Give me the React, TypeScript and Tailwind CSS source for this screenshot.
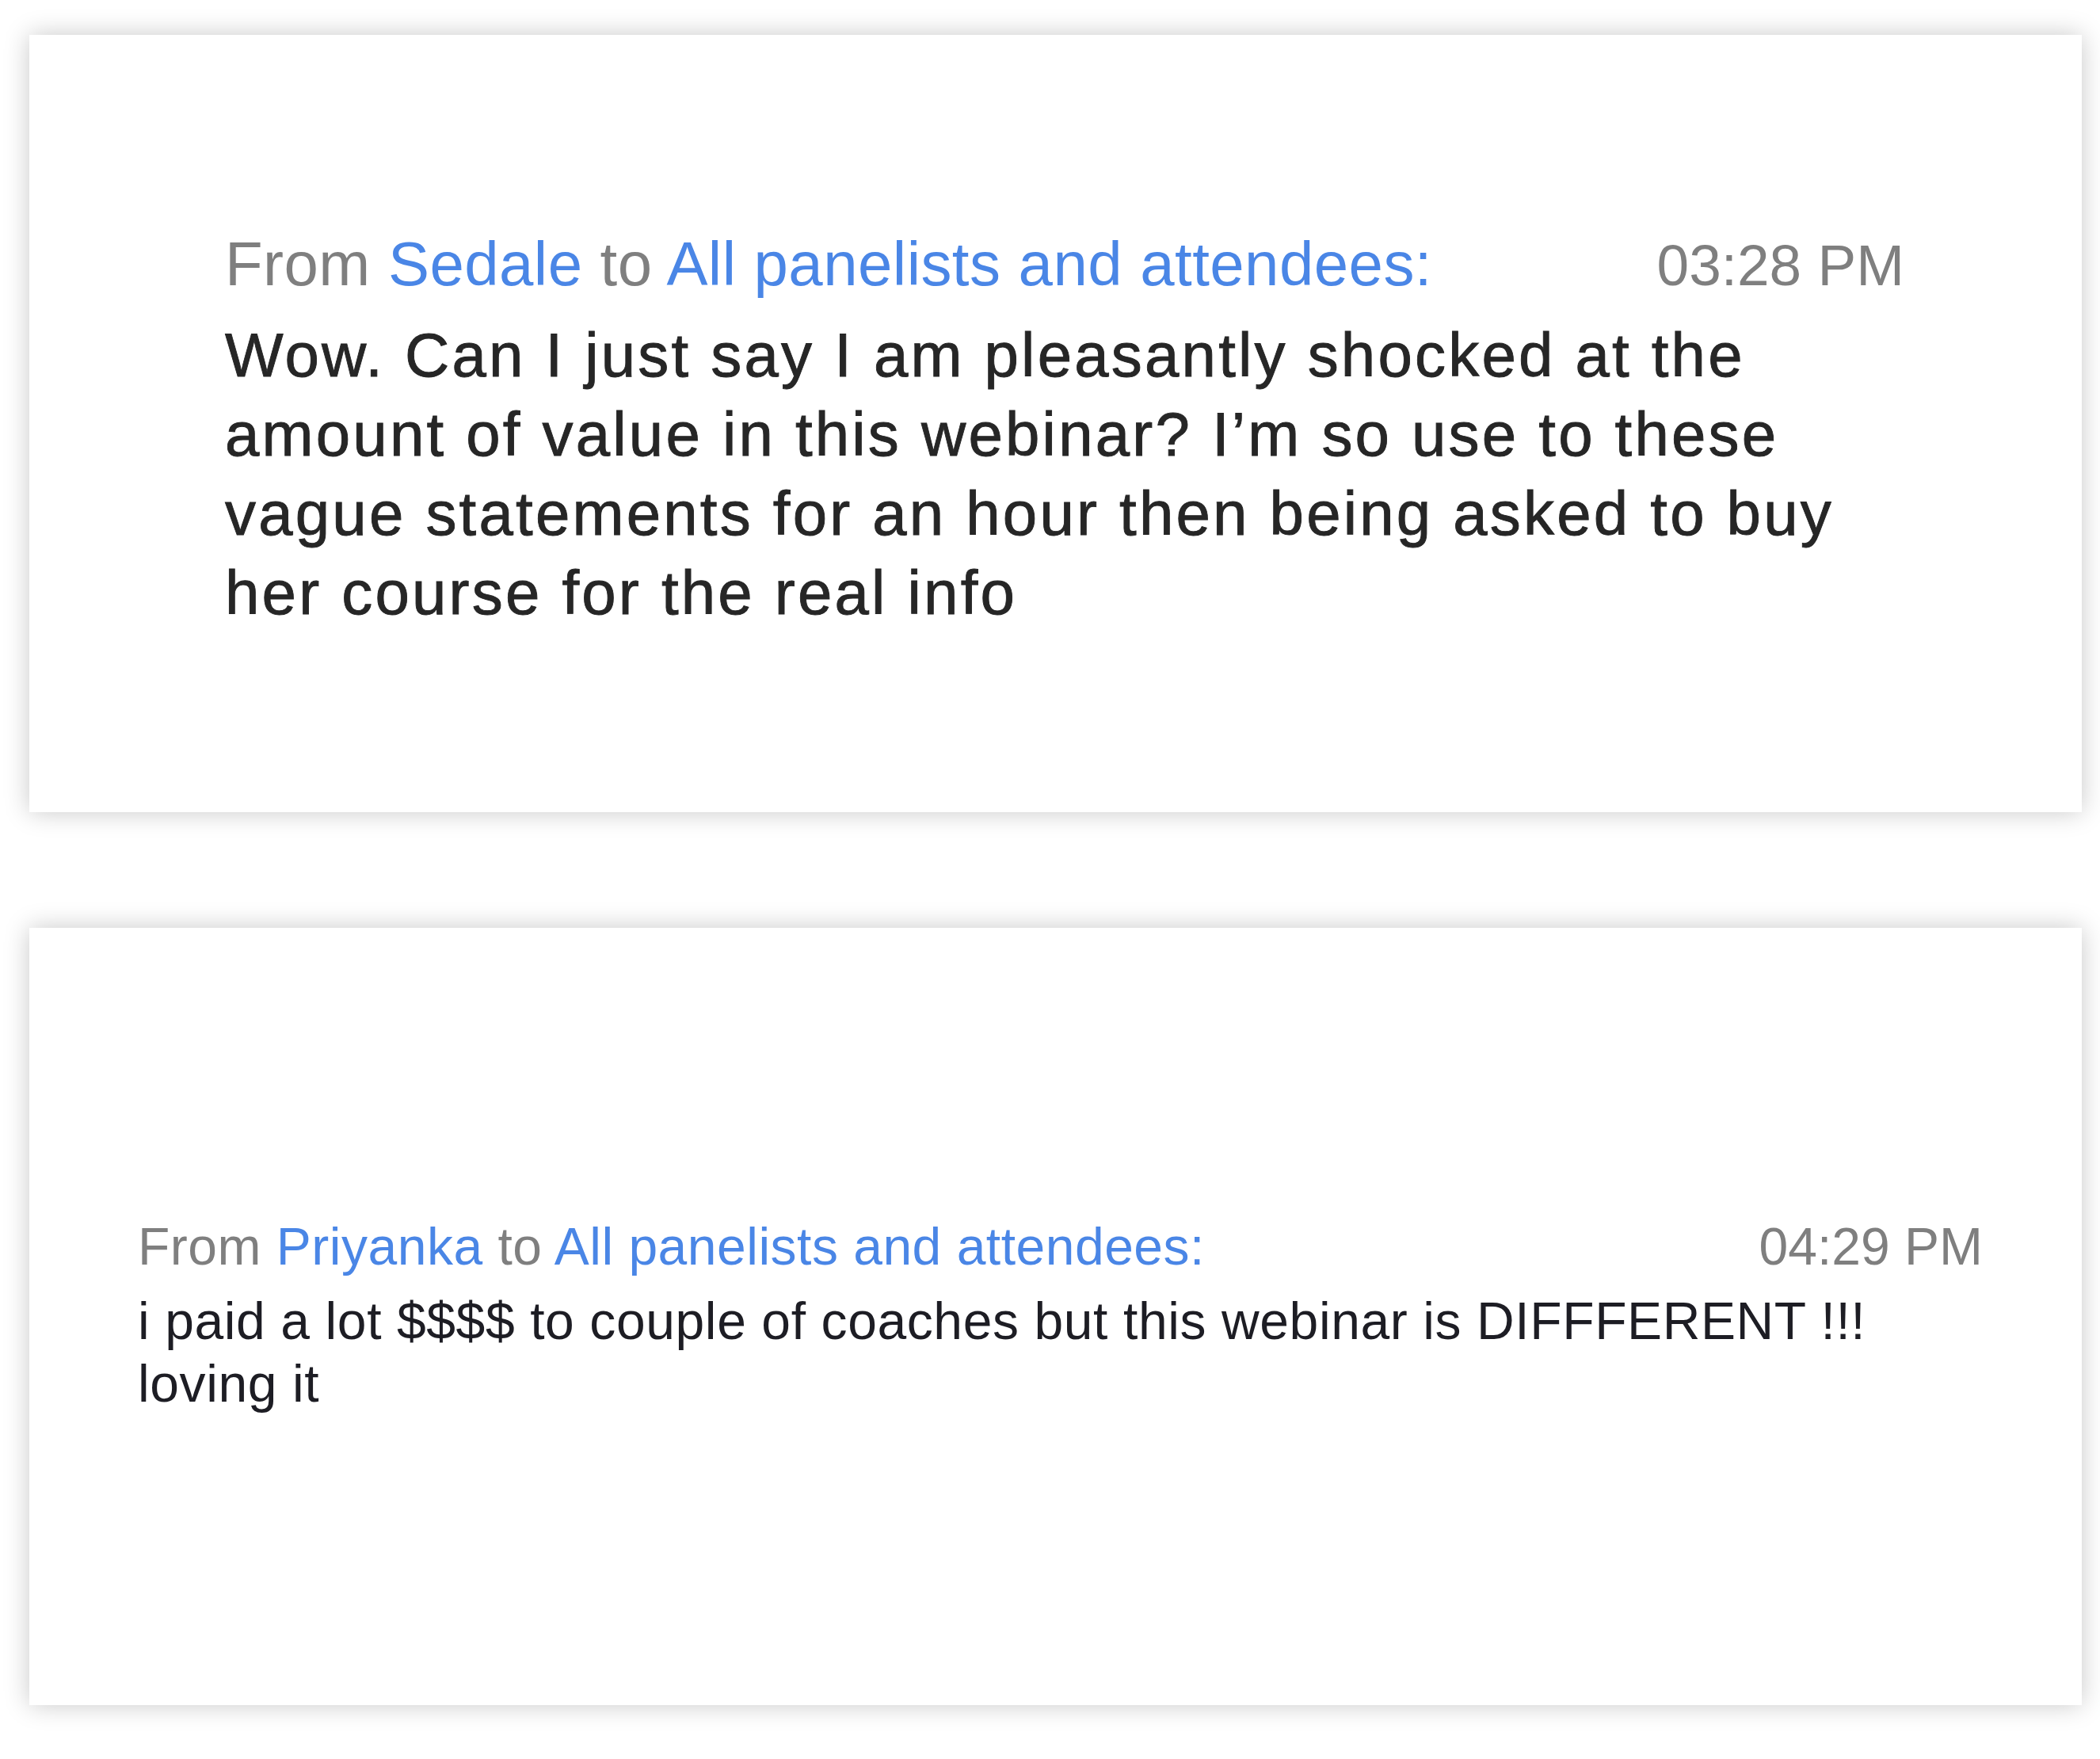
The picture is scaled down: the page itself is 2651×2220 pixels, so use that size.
const font = { fontFamily: '"Liberation Sans", Arial, sans-serif' }

function Header({ sender, time, big }: { sender: string; time: string; big?: boolean }) {
  return (
    <div
      className={
        big
          ? 'flex items-baseline justify-between text-[78px] leading-[100px] tracking-[0.45px] text-[#7f7f7f]'
          : 'flex items-baseline justify-between text-[66px] leading-[79px] tracking-[0.5px] text-[#7f7f7f]'
      }
    >
      <span>
        From <span className="text-[#4a86e6]">{sender}</span> to{' '}
        <span className="text-[#4a86e6]">All panelists and attendees:</span>
      </span>
      <span className={big ? 'text-[73px] tracking-normal' : 'tracking-normal'}>{time}</span>
    </div>
  )
}

function ChatCard({
  sender,
  time,
  lines,
  big,
}: {
  sender: string
  time: string
  lines: string[]
  big?: boolean
}) {
  return (
    <div className="h-[981px] w-[2591px] bg-white shadow-[0_0_30px_rgba(0,0,0,0.22)]">
      {big ? (
        <div className="pl-[247px] pr-[224px] pt-[239px]">
          <Header big sender={sender} time={time} />
          <div className="mt-[13px] text-[78px] leading-[100px] tracking-[3.2px] text-[#262626] [-webkit-text-stroke:0.9px_#262626]">
            {lines.map((l) => (
              <div key={l}>{l}</div>
            ))}
          </div>
        </div>
      ) : (
        <div className="pl-[137px] pr-[125px] pt-[363px]">
          <Header sender={sender} time={time} />
          <div className="mt-[15px] text-[66px] leading-[79px] tracking-[0.6px] text-[#1d1d24]">
            {lines.map((l) => (
              <div key={l}>{l}</div>
            ))}
          </div>
        </div>
      )}
    </div>
  )
}

export default function App() {
  return (
    <div className="min-h-[2220px] w-[2651px] bg-white pl-[37px] pt-[44px]" style={font}>
      <div className="flex flex-col gap-[146px]">
        <ChatCard
          big
          sender="Sedale"
          time="03:28 PM"
          lines={[
            'Wow. Can I just say I am pleasantly shocked at the',
            'amount of value in this webinar? I\u2019m so use to these',
            'vague statements for an hour then being asked to buy',
            'her course for the real info',
          ]}
        />
        <ChatCard
          sender="Priyanka"
          time="04:29 PM"
          lines={['i paid a lot $$$$ to couple of coaches but this webinar is DIFFFERENT !!!', 'loving it']}
        />
      </div>
    </div>
  )
}
